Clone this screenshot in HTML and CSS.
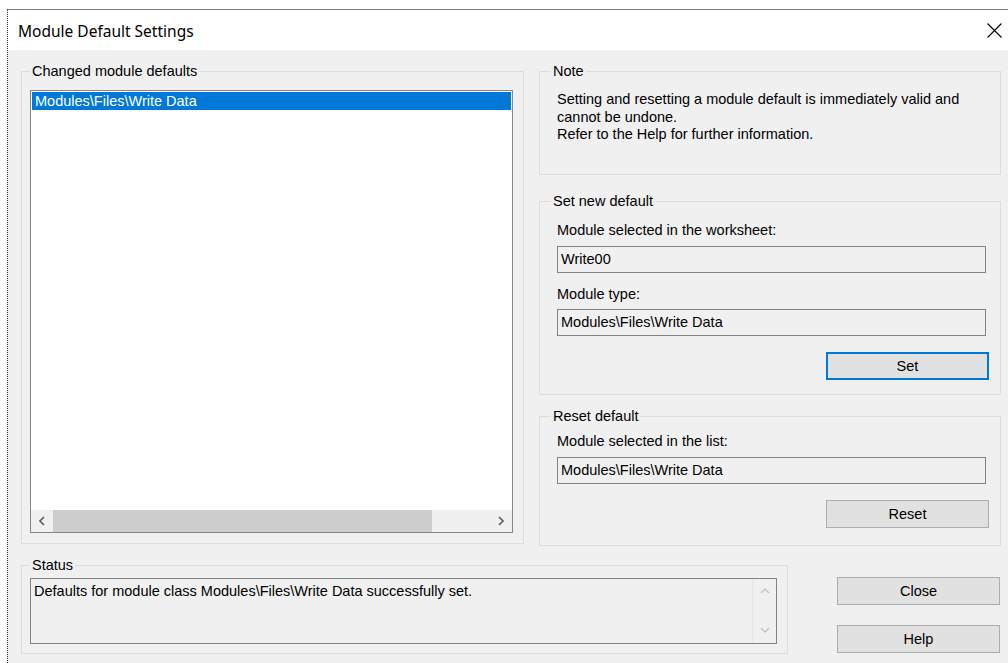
FILE: index.html
```html
<!DOCTYPE html>
<html lang="en">
<head>
<meta charset="utf-8">
<title>Module Default Settings</title>
<link rel="stylesheet" href="styles.css">
</head>
<body>
<div class="window">
  <div class="titlebar">
    <span class="title">Module Default Settings</span>
    <svg class="close-icon" width="15" height="15" viewBox="0 0 15 15" aria-hidden="true">
      <path d="M0.5 0.5 L14.5 14.5 M14.5 0.5 L0.5 14.5" stroke="#000" stroke-width="1.1" fill="none"/>
    </svg>
  </div>

  <div class="content">
    <div class="top-row">
      <fieldset class="group group-list">
        <legend>Changed module defaults</legend>
        <div class="listbox">
          <div class="list-items">
            <div class="list-item selected">Modules\Files\Write Data</div>
          </div>
          <div class="hscroll">
            <span class="hs-arrow">
              <svg width="6" height="10" viewBox="0 0 6 10"><path d="M5 1 L1 5 L5 9" stroke="#606060" stroke-width="1.7" fill="none"/></svg>
            </span>
            <div class="hs-track"><div class="hs-thumb"></div></div>
            <span class="hs-arrow">
              <svg width="6" height="10" viewBox="0 0 6 10"><path d="M1 1 L5 5 L1 9" stroke="#606060" stroke-width="1.7" fill="none"/></svg>
            </span>
          </div>
        </div>
      </fieldset>

      <div class="side">
        <fieldset class="group group-note">
          <legend>Note</legend>
          <p class="note-text">Setting and resetting a module default is immediately valid and<br>cannot be undone.<br>Refer to the Help for further information.</p>
        </fieldset>

        <fieldset class="group group-set">
          <legend>Set new default</legend>
          <div class="label">Module selected in the worksheet:</div>
          <div class="field">Write00</div>
          <div class="label label-spaced">Module type:</div>
          <div class="field field-tight">Modules\Files\Write Data</div>
          <button class="btn btn-default" type="button">Set</button>
        </fieldset>

        <fieldset class="group group-reset">
          <legend>Reset default</legend>
          <div class="label">Module selected in the list:</div>
          <div class="field">Modules\Files\Write Data</div>
          <button class="btn" type="button">Reset</button>
        </fieldset>
      </div>
    </div>

    <div class="bottom-row">
      <fieldset class="group group-status">
        <legend>Status</legend>
        <div class="status-box">
          <div class="status-text">Defaults for module class Modules\Files\Write Data successfully set.</div>
          <div class="vscroll">
            <svg width="10" height="6" viewBox="0 0 10 6"><path d="M1 5 L5 1 L9 5" stroke="#c2c2c2" stroke-width="1.4" fill="none"/></svg>
            <svg width="10" height="6" viewBox="0 0 10 6"><path d="M1 1 L5 5 L9 1" stroke="#c2c2c2" stroke-width="1.4" fill="none"/></svg>
          </div>
        </div>
      </fieldset>

      <div class="buttons">
        <button class="btn" type="button">Close</button>
        <button class="btn" type="button">Help</button>
      </div>
    </div>
  </div>
</div>
</body>
</html>
```

FILE: styles.css
```css
html, body {
  margin: 0;
  padding: 0;
  background: #ffffff;
  overflow: hidden;
}

body {
  font-family: "Liberation Sans", Arial, sans-serif;
  font-size: 14.5px;
  color: #000;
}

/* dialog frame */
.window {
  margin: 9px 0 0 7px;
  height: 654px;
  box-sizing: border-box;
  border-top: 1px solid #7b7b7b;
  border-left: 1px dotted #3a3a3a;
  background: #f0f0f0;
  overflow: hidden;
}

.titlebar {
  height: 40px;
  background: #ffffff;
  display: flex;
  align-items: center;
  justify-content: space-between;
  padding: 0 6px 0 10px;
}

.title {
  font-family: "Noto Sans", "Open Sans", sans-serif;
  font-size: 15.5px;
  color: #000;
  position: relative;
  top: 1px;
}

.close-icon {
  display: block;
}

.content {
  padding: 13px 0 0 13px;
}

/* group boxes */
.group {
  margin: 0;
  padding: 0;
  min-width: 0;
  box-sizing: border-box;
  border: 1px solid #dcdcdc;
}

.group legend {
  padding: 0 2px;
  margin-left: 0;
  line-height: 16px;
  font-size: 14.5px;
}

.side .group legend {
  margin-left: -6px;
}

.top-row {
  display: flex;
  align-items: flex-start;
  gap: 15px;
}

.group-list {
  width: 503px;
  height: 481px;
  padding: 11px 10px 0 8px;
}

/* list box */
.listbox {
  height: 443px;
  box-sizing: border-box;
  border: 1px solid #828790;
  background: #fff;
  display: flex;
  flex-direction: column;
}

.list-items {
  flex: 1;
  padding: 1px;
}

.list-item {
  height: 18px;
  line-height: 18px;
  padding-left: 3px;
  white-space: nowrap;
}

.list-item.selected {
  background: #0078d7;
  color: #fff;
}

.hscroll {
  height: 22px;
  background: #f0f0f0;
  display: flex;
  align-items: stretch;
}

.hs-arrow {
  width: 22px;
  display: flex;
  align-items: center;
  justify-content: center;
}

.hs-track {
  flex: 1;
  display: flex;
}

.hs-thumb {
  width: 379px;
  background: #cdcdcd;
}

/* right column */
.side {
  width: 462px;
  display: flex;
  flex-direction: column;
}

.group-note {
  height: 112px;
  padding: 12px 14px 0 17px;
}

.note-text {
  margin: 0;
  line-height: 17.5px;
}

.group-set {
  margin-top: 18px;
  height: 202px;
  padding: 13px 14px 0 17px;
  display: flex;
  flex-direction: column;
}

.group-reset {
  margin-top: 13px;
  height: 138px;
  padding: 9px 14px 0 17px;
  display: flex;
  flex-direction: column;
}

.label {
  line-height: 17px;
  white-space: nowrap;
}

.label-spaced {
  margin-top: 13px;
}

.field {
  margin-top: 7px;
  height: 27px;
  box-sizing: border-box;
  border: 1px solid #838383;
  background: #f0f0f0;
  padding-left: 3px;
  line-height: 25px;
  white-space: nowrap;
}

.field-tight {
  margin-top: 6px;
}

.btn {
  font-family: inherit;
  font-size: 14.5px;
  color: #000;
  background: #e1e1e1;
  border: 1px solid #adadad;
  height: 28px;
  width: 163px;
  padding: 0;
  box-sizing: border-box;
}

.group-set .btn,
.group-reset .btn {
  margin-top: 16px;
  align-self: flex-end;
  margin-right: -3px;
}

.btn-default {
  border: 2px solid #0078d7;
}

/* bottom area */
.bottom-row {
  display: flex;
  align-items: flex-start;
  margin-top: 11px;
}

.group-status {
  width: 767px;
  height: 97px;
  padding: 5px 10px 0 8px;
}

.status-box {
  height: 66px;
  box-sizing: border-box;
  border: 1px solid #838383;
  background: #f0f0f0;
  display: flex;
}

.status-text {
  flex: 1;
  padding: 4px 0 0 3px;
  line-height: 17px;
  white-space: nowrap;
}

.vscroll {
  width: 23px;
  border-left: 1px solid #e4e4e4;
  display: flex;
  flex-direction: column;
  align-items: center;
  justify-content: space-between;
  padding: 9px 0 10px;
}

.vscroll svg {
  display: block;
}

.buttons {
  margin-left: 49px;
  margin-top: 20px;
  display: flex;
  flex-direction: column;
  gap: 20px;
}
```
